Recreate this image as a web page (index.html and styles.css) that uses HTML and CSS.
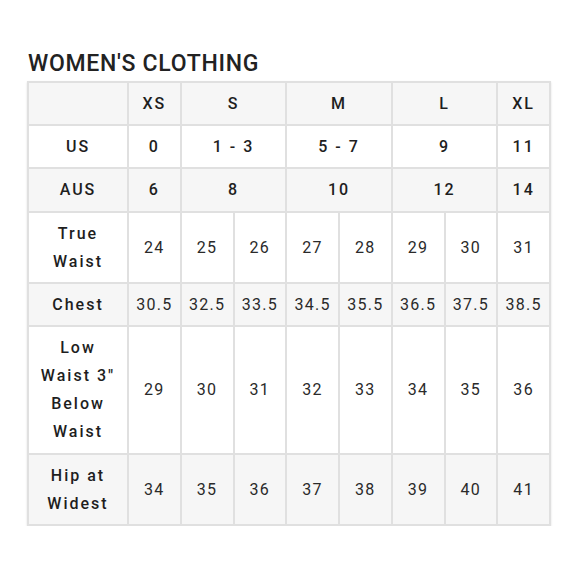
FILE: index.html
```html
<!DOCTYPE html>
<html>
<head>
<meta charset="utf-8">
<link rel="stylesheet" href="styles.css">
</head>
<body>
<div class="page">
  <h1 class="title">WOMEN'S CLOTHING</h1>
  <table class="chart">
    <colgroup>
      <col class="c-label">
      <col class="c-num"><col class="c-num"><col class="c-num"><col class="c-num">
      <col class="c-num"><col class="c-num"><col class="c-num"><col class="c-num">
    </colgroup>
    <tr class="r-head shade">
      <td></td><td class="b">XS</td><td class="b" colspan="2">S</td><td class="b" colspan="2">M</td><td class="b" colspan="2">L</td><td class="b">XL</td>
    </tr>
    <tr class="r-us">
      <td class="b">US</td><td class="b">0</td><td class="b" colspan="2">1 - 3</td><td class="b" colspan="2">5 - 7</td><td class="b" colspan="2">9</td><td class="b">11</td>
    </tr>
    <tr class="r-aus shade">
      <td class="b">AUS</td><td class="b">6</td><td class="b" colspan="2">8</td><td class="b" colspan="2">10</td><td class="b" colspan="2">12</td><td class="b">14</td>
    </tr>
    <tr class="r-two">
      <td class="b">True<br>Waist</td><td>24</td><td>25</td><td>26</td><td>27</td><td>28</td><td>29</td><td>30</td><td>31</td>
    </tr>
    <tr class="r-chest shade">
      <td class="b">Chest</td><td>30.5</td><td>32.5</td><td>33.5</td><td>34.5</td><td>35.5</td><td>36.5</td><td>37.5</td><td>38.5</td>
    </tr>
    <tr class="r-four">
      <td class="b">Low<br>Waist 3"<br>Below<br>Waist</td><td>29</td><td>30</td><td>31</td><td>32</td><td>33</td><td>34</td><td>35</td><td>36</td>
    </tr>
    <tr class="r-two shade">
      <td class="b">Hip at<br>Widest</td><td>34</td><td>35</td><td>36</td><td>37</td><td>38</td><td>39</td><td>40</td><td>41</td>
    </tr>
  </table>
</div>
</body>
</html>
```

FILE: styles.css
```css
html, body {
  margin: 0;
  padding: 0;
  background: #ffffff;
}
.page {
  padding: 50px 0 0 27px;
  font-family: Roboto, "Liberation Sans", sans-serif;
  color: #222222;
}
.title {
  margin: 0 0 3px 1px;
  font-size: 23px;
  line-height: 28px;
  font-weight: 500;
  letter-spacing: 0.7px;
  color: #222222;
}
.chart {
  border-collapse: collapse;
  table-layout: fixed;
  width: 522px;
  box-shadow: 0 1px 2px rgba(0,0,0,0.12);
}
.c-label { width: 100px; }
.c-num { width: 52.75px; }
.chart td {
  border: 2px solid #e0e0e0;
  text-align: center;
  vertical-align: middle;
  padding: 0;
  font-size: 16px;
  line-height: 28px;
  letter-spacing: 1.3px;
  color: #2a2a2a;
}
.chart td.b {
  font-weight: 500;
  letter-spacing: 2px;
  color: #1e1e1e;
}
.shade td { background: #f6f6f6; }
.r-head td, .r-us td, .r-chest td { height: 41px; }
.r-aus td { height: 42px; }
.r-two td { height: 69px; }
.r-four td { height: 126px; }
```
